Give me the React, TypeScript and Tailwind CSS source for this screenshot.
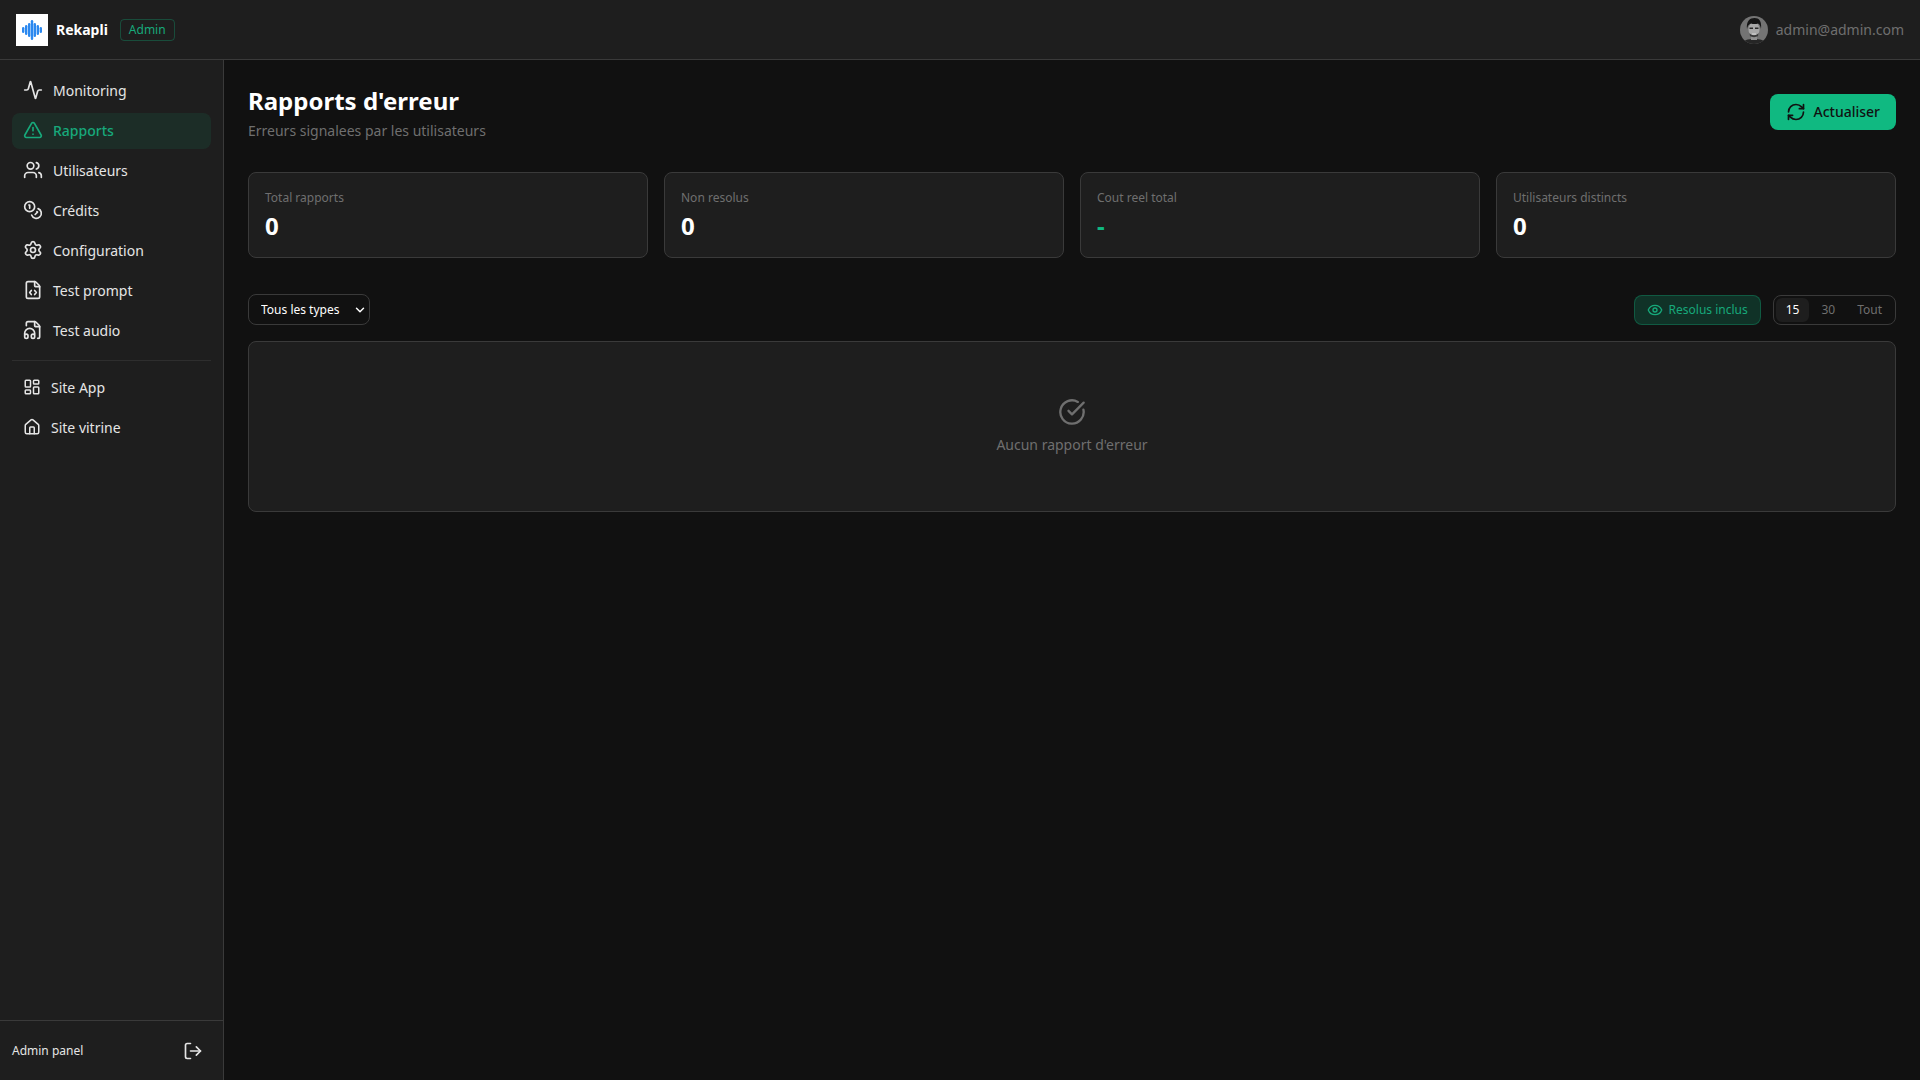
import { Activity, TriangleAlert, Users, Coins, Settings, FileCode, FileHeadphone, LayoutDashboard, House, LogOut, RefreshCw, Eye, CircleCheckBig, ChevronDown } from "lucide-react";

const NAV_MAIN = [
  { label: "Monitoring", icon: Activity },
  { label: "Rapports", icon: TriangleAlert, active: true },
  { label: "Utilisateurs", icon: Users },
  { label: "Crédits", icon: Coins },
  { label: "Configuration", icon: Settings },
  { label: "Test prompt", icon: FileCode },
  { label: "Test audio", icon: FileHeadphone },
];

const NAV_SITES = [
  { label: "Site App", icon: LayoutDashboard },
  { label: "Site vitrine", icon: House },
];

const STATS = [
  { label: "Total rapports", value: "0" },
  { label: "Non resolus", value: "0" },
  { label: "Cout reel total", value: "-", accent: true },
  { label: "Utilisateurs distincts", value: "0" },
];

function Logo() {
  return (
    <div className="w-8 h-8 bg-white flex items-center justify-center shrink-0">
      <svg viewBox="0 0 32 32" className="w-8 h-8" fill="#2b88ef">
        <rect x="6" y="13" width="2.4" height="6" rx="1.2" />
        <rect x="9" y="11" width="2.400" height="10" rx="1.2" />
        <rect x="12" y="9" width="2.400" height="14" rx="1.2" />
        <rect x="14.800" y="6" width="2.400" height="20" rx="1.2" />
        <rect x="17.600" y="9" width="2.400" height="14" rx="1.2" />
        <rect x="20.600" y="11" width="2.400" height="10" rx="1.2" />
        <rect x="23.600" y="13" width="2.400" height="6" rx="1.2" />
      </svg>
    </div>
  );
}

function Avatar() {
  return (
    <svg viewBox="0 0 28 28" className="w-7 h-7 rounded-full shrink-0">
      <rect width="28" height="28" fill="#747474" />
      <path d="M2 28c1-4 6-5 12-5s11 1 12 5z" fill="#262626" />
      <rect x="11" y="18" width="6" height="6" fill="#8f8f8f" />
      <ellipse cx="14" cy="13.500" rx="5.500" ry="7.500" fill="#a8a8a8" />
      <path d="M7 13C6 5 10 2 14.500 2S22 5 21 13c-.5-3-1.500-5-3-5.500-2 .8-5 .8-7 0C9 8 7.500 10 7 13z" fill="#161616" />
      <rect x="9.500" y="11.500" width="3.500" height="1.500" fill="#2a2a2a" />
      <rect x="15" y="11.500" width="3.500" height="1.500" fill="#2a2a2a" />
      <path d="M9.500 17c2 3 7 3 9 0l-.5 3c-2 1.500-6 1.500-8 0z" fill="#3a3a3a" />
      <rect x="12" y="17.500" width="4" height="1" fill="#d8d8d8" />
    </svg>
  );
}

export default function App() {
  return (
    <div className="h-screen flex flex-col bg-[#111111] text-white overflow-hidden font-['Noto_Sans',sans-serif]">
      {/* Top bar */}
      <header className="h-[60px] shrink-0 bg-[#1e1e1e] border-b border-[#3a3a3a] flex items-center justify-between pl-4 pr-[16px]">
        <div className="flex items-center">
          <Logo />
          <span className="ml-2 text-sm font-bold">Rekapli</span>
          <span className="ml-3 px-2 h-[22px] flex items-center rounded border border-[#10b981]/30 text-[#17a97b] text-xs">Admin</span>
        </div>
        <div className="flex items-center gap-2">
          <Avatar />
          <span className="text-sm text-[#6f6f6f]">admin@admin.com</span>
        </div>
      </header>

      <div className="flex-1 flex min-h-0">
        {/* Sidebar */}
        <aside className="w-56 shrink-0 bg-[#1e1e1e] border-r border-[#3a3a3a] flex flex-col">
          <nav className="flex-1 px-3 pt-[13px]">
            <div className="flex flex-col gap-1">
              {NAV_MAIN.map((item) => (
                <a
                  key={item.label}
                  className={`h-9 flex items-center gap-2.5 pl-[11px] pr-3 rounded-lg text-sm ${item.active ? "bg-[#10b981]/10 text-[#17a97b] font-medium" : "text-[#e5e5e5]"}`}
                >
                  <item.icon className="w-5 h-5 shrink-0 -mt-0.5" strokeWidth={2} />
                  {item.label}
                </a>
              ))}
            </div>
            <div className="mt-[11px] mb-[9px] border-t border-[#2e2e2e]" />
            <div className="flex flex-col gap-1">
              {NAV_SITES.map((item) => (
                <a key={item.label} className="h-9 flex items-center gap-2.5 pl-[11px] pr-3 rounded-lg text-sm text-[#e5e5e5]">
                  <item.icon className="w-[18px] h-[18px] shrink-0 -mt-0.5" strokeWidth={2} />
                  {item.label}
                </a>
              ))}
            </div>
          </nav>
          <div className="h-[60px] shrink-0 border-t border-[#3a3a3a] flex items-center justify-between pl-3 pr-5">
            <span className="text-xs text-[#e5e5e5]">Admin panel</span>
            <LogOut className="w-5 h-5 text-[#e5e5e5]" strokeWidth={2} />
          </div>
        </aside>

        {/* Main */}
        <main className="flex-1 min-w-0 px-6 pt-[25px]">
          <div className="flex items-start justify-between h-[67px]">
            <div>
              <h1 className="text-2xl font-bold leading-8">Rapports d'erreur</h1>
              <p className="text-sm text-[#6f6f6f] mt-1">Erreurs signalees par les utilisateurs</p>
            </div>
            <button className="mt-[9px] h-9 px-4 flex items-center gap-[7px] rounded-lg bg-[#10b981] text-[#111111] text-sm font-medium">
              <RefreshCw className="w-5 h-5" strokeWidth={2} />
              Actualiser
            </button>
          </div>

          <div className="grid grid-cols-4 gap-4 mt-5">
            {STATS.map((s) => (
              <div key={s.label} className="h-[86px] bg-[#1e1e1e] border border-[#3a3a3a] rounded-lg px-4 pt-[17px]">
                <div className="text-xs text-[#6f6f6f] leading-4">{s.label}</div>
                <div className={`mt-1 text-2xl font-bold leading-8 ${s.accent ? "text-[#10b981]" : "text-white"}`}>{s.value}</div>
              </div>
            ))}
          </div>

          <div className="flex items-center justify-between mt-9">
            <div className="relative">
              <select className="block h-[31px] w-[122px] pl-3 pr-5 appearance-none bg-[#111111] border border-[#3a3a3a] rounded-lg text-xs text-white outline-none">
                <option>Tous les types</option>
              </select>
              <ChevronDown className="absolute right-[3px] top-[9px] w-3.5 h-3.5 text-white pointer-events-none" strokeWidth={2.5} />
            </div>
            <div className="flex items-center gap-3">
              <button className="h-[30px] w-[127px] justify-center flex items-center gap-1.5 rounded-lg border border-[#10b981]/30 bg-[#10b981]/20 text-[#17a97b] text-xs">
                <Eye className="w-4 h-4" strokeWidth={2} />
                Resolus inclus
              </button>
              <div className="h-[30px] flex items-center gap-0.5 pl-0.5 pr-[3px] py-0.5 rounded-lg border border-[#3a3a3a] text-xs">
                <span className="h-6 px-2.5 flex items-center rounded-md bg-[#1e1e1e] text-white">15</span>
                <span className="h-6 px-2.5 flex items-center text-[#6f6f6f]">30</span>
                <span className="h-6 px-2.5 flex items-center text-[#6f6f6f]">Tout</span>
              </div>
            </div>
          </div>

          <div className="h-[171px] mt-4 pb-px bg-[#1e1e1e] border border-[#3a3a3a] rounded-lg flex flex-col items-center justify-center">
            <CircleCheckBig className="w-7 h-7 text-[#6f6f6f]" strokeWidth={2} />
            <p className="text-sm text-[#6f6f6f] mt-[9px]">Aucun rapport d'erreur</p>
          </div>
        </main>
      </div>
    </div>
  );
}
